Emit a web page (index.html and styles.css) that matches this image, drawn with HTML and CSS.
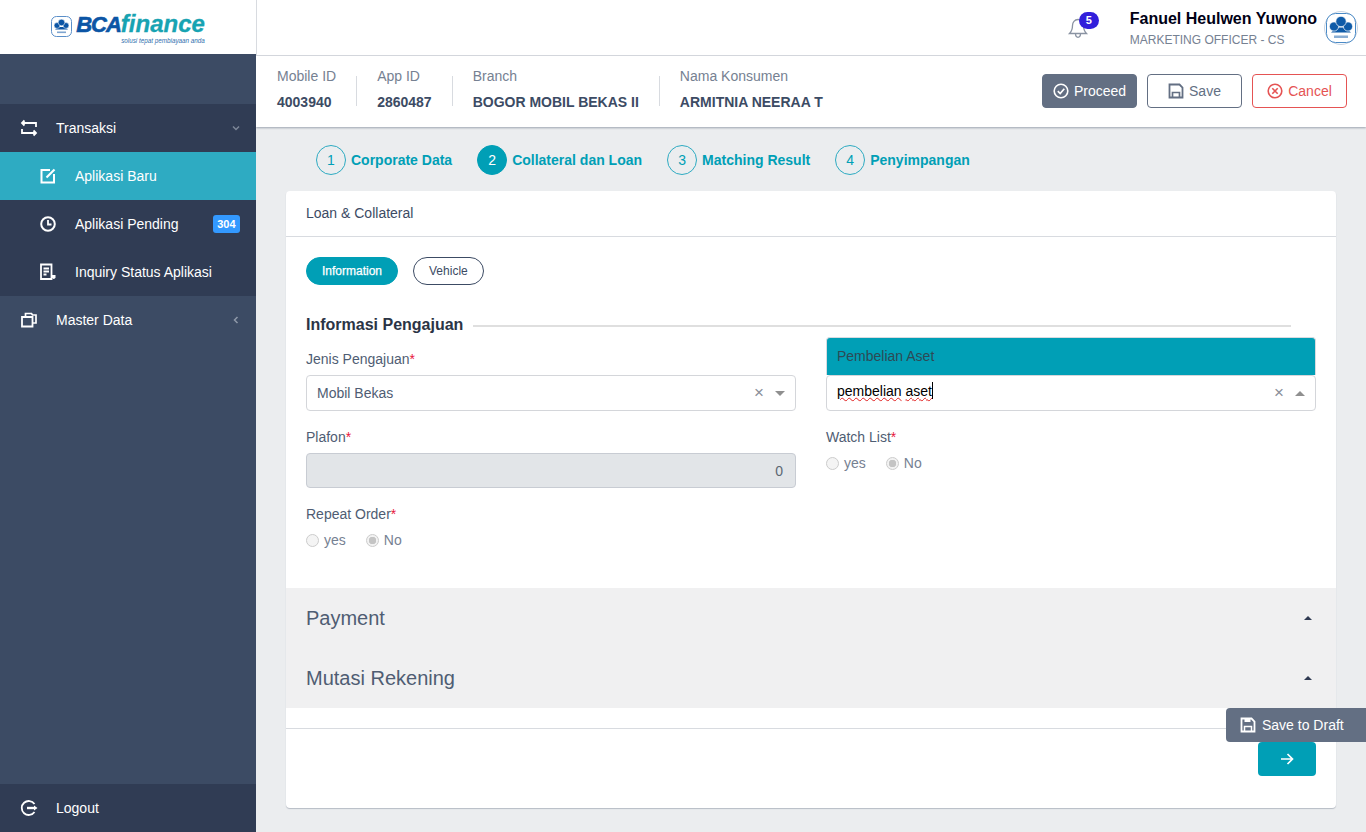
FILE: index.html
```html
<!DOCTYPE html>
<html lang="en">
<head>
    <meta charset="UTF-8">
    <title>BCA Finance</title>
    <link rel="stylesheet" href="styles.css">
</head>
<body>
    <div class="app">
        <aside class="sidebar">
            <div class="brand">
                <svg class="emblem" width="21" height="21" viewBox="0 0 21 21">
                    <rect x="0.5" y="0.5" width="20" height="20" rx="5" fill="#fff" stroke="#5b8fc9"/>
                    <path d="M4 13.500h13l-3.500-2.500h-6z" fill="#0b55a5"/>
                    <circle cx="6" cy="9.500" r="2.900" fill="#0b55a5" stroke="#fff" stroke-width="0.500"/>
                    <circle cx="15" cy="9.500" r="2.900" fill="#0b55a5" stroke="#fff" stroke-width="0.500"/>
                    <circle cx="10.500" cy="6.500" r="3.300" fill="#0b55a5" stroke="#fff" stroke-width="0.500"/>
                    <rect x="6" y="15.500" width="9" height="1.600" fill="#7fa5d0"/>
                </svg>
                <div class="brand-text">
                    <div class="brand-name"><span class="brand-bca">BCA</span><span class="brand-finance">finance</span></div>
                    <div class="brand-tag">solusi tepat pembiayaan anda</div>
                </div>
            </div>
            <nav class="menu">
                <a class="menu-item open">
                    <svg class="menu-icon" viewBox="0 0 18 18"><path d="M4.500 1.500 2 4l2.500 2.500M2.500 4H16v4M13.500 16.500 16 14l-2.500-2.500M15.500 14H2v-4" fill="none" stroke="#fff" stroke-width="1.800"/></svg>
                    <span class="menu-text">Transaksi</span>
                    <svg class="chev" width="8" height="8" viewBox="0 0 8 8"><path d="M1 2.500 4 5.500 7 2.500" fill="none" stroke="#7d8798" stroke-width="1.500"/></svg>
                </a>
                <a class="menu-item sub active">
                    <svg class="menu-icon" viewBox="0 0 18 18"><path d="M11 3H2.500v12.500H15V7" fill="none" stroke="#fff" stroke-width="2"/><path d="M7.500 10.500 15.500 2.500" stroke="#fff" stroke-width="2.200"/></svg>
                    <span class="menu-text">Aplikasi Baru</span>
                </a>
                <a class="menu-item sub">
                    <svg class="menu-icon" viewBox="0 0 18 18"><circle cx="9" cy="9" r="6.800" fill="none" stroke="#fff" stroke-width="2"/><path d="M9 5v4.500h3.500" fill="none" stroke="#fff" stroke-width="1.800"/></svg>
                    <span class="menu-text">Aplikasi Pending</span>
                    <span class="menu-badge">304</span>
                </a>
                <a class="menu-item sub">
                    <svg class="menu-icon" viewBox="0 0 18 18"><path d="M2 1.500h10.500v14.500H2z" fill="none" stroke="#fff" stroke-width="1.800"/><path d="M4.500 5.500h5.500M4.500 8.500h5.500M4.500 11.500h3" stroke="#fff" stroke-width="1.800"/><path d="M13 12h3.500v2.500a1.800 1.800 0 0 1-3.500 0z" fill="#fff"/></svg>
                    <span class="menu-text">Inquiry Status Aplikasi</span>
                </a>
                <a class="menu-item">
                    <svg class="menu-icon" viewBox="0 0 18 18"><path d="M5.500 5V2.500h6l1 1.500h3.500v8h-3" fill="none" stroke="#fff" stroke-width="1.700"/><path d="M2 6h10.500v9.500H2z" fill="none" stroke="#fff" stroke-width="1.800"/></svg>
                    <span class="menu-text">Master Data</span>
                    <svg class="chev" width="8" height="8" viewBox="0 0 8 8"><path d="M5.500 1 2.500 4l3 3" fill="none" stroke="#8f99a9" stroke-width="1.500"/></svg>
                </a>
            </nav>
            <a class="menu-item logout">
                <svg class="menu-icon" viewBox="0 0 18 18"><path d="M14.500 5A7 7 0 1 0 14.500 13" fill="none" stroke="#fff" stroke-width="1.800"/><path d="M7 9h8" stroke="#fff" stroke-width="2.400"/><path d="M14 6.500 17.500 9 14 11.500z" fill="#fff"/></svg>
                <span class="menu-text">Logout</span>
            </a>
        </aside>

        <div class="main">
            <header class="topbar">
                <div class="bell">
                    <svg width="22" height="24" viewBox="0 0 22 24"><path d="M11 3.500c-3.500 0-5.500 2.800-5.500 6 0 4-1 6-3 8h17c-2-2-3-4-3-8 0-3.200-2-6-5.500-6zM8.500 17.500c0 5 5 5 5 0" fill="none" stroke="#8a93a2" stroke-width="1.300"/></svg>
                    <span class="bell-badge">5</span>
                </div>
                <div class="user">
                    <div class="user-name">Fanuel Heulwen Yuwono</div>
                    <div class="user-role">MARKETING OFFICER - CS</div>
                </div>
                <svg class="avatar" width="34" height="34" viewBox="0 0 34 34">
                    <circle cx="17" cy="17" r="16.500" fill="#fff" stroke="#c9d4e2"/>
                    <rect x="2.500" y="2.500" width="29" height="29" rx="9" fill="#fff" stroke="#4a8ac6"/>
                    <path d="M7 21.500h20l-6-5h-8z" fill="#0f5ba8"/>
                    <circle cx="10" cy="15.500" r="4.600" fill="#0f5ba8" stroke="#fff" stroke-width="0.700"/>
                    <circle cx="24" cy="15.500" r="4.600" fill="#0f5ba8" stroke="#fff" stroke-width="0.700"/>
                    <circle cx="17" cy="10.500" r="5.200" fill="#0f5ba8" stroke="#fff" stroke-width="0.700"/>
                    <rect x="10" y="24.500" width="14" height="2.500" fill="#8aaed4"/>
                </svg>
            </header>

            <section class="subheader">
                <div class="meta">
                    <div class="meta-item"><span class="meta-label">Mobile ID</span><strong>4003940</strong></div>
                    <div class="meta-item"><span class="meta-label">App ID</span><strong>2860487</strong></div>
                    <div class="meta-item"><span class="meta-label">Branch</span><strong>BOGOR MOBIL BEKAS II</strong></div>
                    <div class="meta-item"><span class="meta-label">Nama Konsumen</span><strong>ARMITNIA NEERAA T</strong></div>
                </div>
                <div class="actions">
                    <button class="btn btn-proceed">
                        <svg width="16" height="16" viewBox="0 0 16 16"><circle cx="8" cy="8" r="6.800" fill="none" stroke="#fff" stroke-width="1.600"/><path d="M4.800 8.200 7.200 10.500 11.300 5.800" fill="none" stroke="#fff" stroke-width="1.700"/></svg>
                        Proceed
                    </button>
                    <button class="btn btn-save">
                        <svg width="16" height="16" viewBox="0 0 16 16"><path d="M1.500 1.500h10l3 3v10h-13z" fill="none" stroke="#636f83" stroke-width="1.800"/><path d="M4.500 14.500V9.500h7v5" fill="none" stroke="#636f83" stroke-width="1.700"/></svg>
                        Save
                    </button>
                    <button class="btn btn-cancel">
                        <svg width="16" height="16" viewBox="0 0 16 16"><circle cx="8" cy="8" r="6.800" fill="none" stroke="#e55353" stroke-width="1.600"/><path d="M5.300 5.300l5.400 5.400M10.700 5.300l-5.400 5.400" stroke="#e55353" stroke-width="1.600"/></svg>
                        Cancel
                    </button>
                </div>
            </section>

            <ol class="steps">
                <li class="step"><span class="step-no">1</span>Corporate Data</li>
                <li class="step current"><span class="step-no">2</span>Collateral dan Loan</li>
                <li class="step"><span class="step-no">3</span>Matching Result</li>
                <li class="step"><span class="step-no">4</span>Penyimpangan</li>
            </ol>

            <section class="card">
                <div class="card-header">Loan &amp; Collateral</div>
                <div class="card-body">
                    <div class="pills">
                        <span class="pill pill-on">Information</span>
                        <span class="pill">Vehicle</span>
                    </div>
                    <div class="section-title"><span>Informasi Pengajuan</span></div>
                    <div class="form-grid">
                        <div class="field">
                            <label class="label">Jenis Pengajuan<i>*</i></label>
                            <div class="select">
                                <span class="select-value">Mobil Bekas</span>
                                <span class="select-clear">×</span>
                                <span class="caret-down"></span>
                            </div>
                        </div>
                        <div class="field">
                            <label class="label">&nbsp;</label>
                            <div class="select is-open">
                                <div class="dropdown">Pembelian Aset</div>
                                <span class="select-value typed"><span class="misspelled">pembelian</span> <span class="misspelled">aset</span></span>
                                <span class="select-clear">×</span>
                                <span class="caret-up"></span>
                            </div>
                        </div>
                        <div class="field">
                            <label class="label">Plafon<i>*</i></label>
                            <div class="input-disabled">0</div>
                        </div>
                        <div class="field">
                            <label class="label">Watch List<i>*</i></label>
                            <div class="radios">
                                <span class="radio"><span class="dot"></span>yes</span>
                                <span class="radio"><span class="dot checked"></span>No</span>
                            </div>
                        </div>
                        <div class="field">
                            <label class="label">Repeat Order<i>*</i></label>
                            <div class="radios">
                                <span class="radio"><span class="dot"></span>yes</span>
                                <span class="radio"><span class="dot checked"></span>No</span>
                            </div>
                        </div>
                    </div>
                </div>
                <div class="collapse-row"><span>Payment</span><span class="mini-up"></span></div>
                <div class="collapse-row"><span>Mutasi Rekening</span><span class="mini-up"></span></div>
                <div class="card-footer">
                    <button class="btn-next">
                        <svg width="16" height="16" viewBox="0 0 16 16"><path d="M2 8h11M8.500 3 13.500 8l-5 5" fill="none" stroke="#fff" stroke-width="1.700"/></svg>
                    </button>
                </div>
            </section>
        </div>
    </div>

    <button class="draft">
        <svg width="16" height="16" viewBox="0 0 16 16"><path d="M1.500 1.500h10l3 3v10h-13z" fill="none" stroke="#fff" stroke-width="1.800"/><path d="M4.500 1.500v3.500h6V1.500" fill="#fff"/><path d="M4.500 14.500V9.500h7v5" fill="none" stroke="#fff" stroke-width="1.500"/></svg>
        Save to Draft
    </button>
</body>
</html>
```

FILE: styles.css
```css
* {
    box-sizing: border-box;
}
body {
    margin: 0;
    height: 832px;
    overflow: hidden;
    position: relative;
    background-color: #ebedef;
    color: #3c4b64;
    font-family: "Liberation Sans", Arial, sans-serif;
    font-size: 14px;
}
.app {
    display: flex;
    height: 832px;
}

/* sidebar */
.sidebar {
    width: 256px;
    flex-shrink: 0;
    display: flex;
    flex-direction: column;
    background-color: #3c4b64;
    color: #fff;
}
.brand {
    height: 54px;
    background-color: #fff;
    display: flex;
    align-items: center;
    justify-content: center;
    gap: 4px;
}
.emblem {
    margin-top: -2px;
}
.brand-text {
    display: flex;
    flex-direction: column;
    margin-top: 4px;
}
.brand-name {
    font-weight: bold;
    font-style: italic;
    line-height: 20px;
    white-space: nowrap;
}
.brand-bca {
    color: #0b55a5;
    font-size: 22px;
    letter-spacing: -1px;
    -webkit-text-stroke: 0.6px #0b55a5;
}
.brand-finance {
    color: #17a3b2;
    font-size: 24px;
    -webkit-text-stroke: 0.3px #17a3b2;
}
.brand-tag {
    font-size: 6.300px;
    font-style: italic;
    color: #2f6fae;
    text-align: right;
    line-height: 7px;
}
.menu {
    margin-top: 50px;
    flex: 1;
}
.menu-item {
    height: 48px;
    display: flex;
    align-items: center;
    padding: 0 16px 0 20px;
    color: #fff;
}
.menu-icon {
    width: 18px;
    height: 18px;
    flex-shrink: 0;
    margin-right: 18px;
}
.menu-text {
    flex: 1;
}
.menu-item.open, .menu-item.sub, .logout {
    background-color: #303c54;
}
.menu-item.sub {
    padding-left: 39px;
}
.menu-item.active {
    background-color: #2eabc2;
}
.menu-badge {
    background-color: #39f;
    font-size: 11px;
    font-weight: bold;
    padding: 2px 4.500px;
    border-radius: 3px;
    line-height: 14px;
}

/* top */
.main {
    flex: 1;
    min-width: 0;
}
.topbar {
    height: 56px;
    background-color: #fff;
    border-bottom: 1px solid #d8dbe0;
    border-left: 1px solid #d8dbe0;
    display: flex;
    align-items: center;
    justify-content: flex-end;
    padding-right: 8px;
}
.bell {
    position: relative;
    width: 22px;
    height: 24px;
    margin-right: 41px;
    margin-top: 1px;
}
.bell-badge {
    position: absolute;
    top: -4px;
    left: 12px;
    width: 20px;
    height: 17px;
    border-radius: 9px;
    background-color: #321fdb;
    color: #fff;
    font-size: 11px;
    font-weight: bold;
    text-align: center;
    line-height: 17px;
}
.user {
    padding-top: 2px;
}
.user-name {
    font-size: 16px;
    font-weight: bold;
    color: #000015;
    line-height: 18px;
    margin-bottom: 4px;
}
.user-role {
    font-size: 12px;
    color: #768192;
    line-height: 16px;
}
.avatar {
    margin-left: 7px;
}
.subheader {
    height: 71px;
    background-color: #fff;
    box-shadow: 0 1px 2px rgba(60, 75, 100, 0.45);
    display: flex;
    align-items: flex-start;
    justify-content: space-between;
    padding: 12px 19px 0 21px;
}
.meta {
    display: flex;
    align-items: flex-start;
}
.meta-item {
    display: flex;
    flex-direction: column;
    gap: 10px;
    padding: 0 20px 0 21px;
    position: relative;
}
.meta-item:first-child {
    padding-left: 0;
}
.meta-item + .meta-item::before {
    content: "";
    position: absolute;
    left: 0;
    top: 8px;
    width: 1px;
    height: 30px;
    background-color: #d8dbe0;
}
.meta-label {
    color: #768192;
    line-height: 16px;
}
.meta-item strong {
    font-size: 14px;
    line-height: 16px;
}
.actions {
    display: flex;
    gap: 10px;
    margin-top: 6px;
}
.btn {
    width: 95px;
    height: 34px;
    border-radius: 4px;
    font: 14px "Liberation Sans", Arial, sans-serif;
    display: flex;
    align-items: center;
    justify-content: center;
    gap: 5px;
    background-color: #fff;
    border: 1px solid #636f83;
    padding: 0;
}
.btn-proceed {
    background-color: #636f83;
    color: #fff;
}
.btn-save {
    color: #636f83;
}
.btn-cancel {
    border-color: #e55353;
    color: #e55353;
}

/* steps */
.steps {
    list-style: none;
    margin: 0;
    padding: 18px 0 0 60px;
    display: flex;
    gap: 25px;
}
.step {
    display: flex;
    align-items: center;
    gap: 5px;
    height: 30px;
    color: #009fb6;
    font-weight: bold;
}
.step-no {
    width: 30px;
    height: 30px;
    border-radius: 50%;
    border: 1px solid #2eabc2;
    display: flex;
    align-items: center;
    justify-content: center;
    font-weight: normal;
    font-size: 14px;
}
.step.current .step-no {
    background-color: #009fb6;
    color: #fff;
    border-color: #009fb6;
}

/* card */
.card {
    margin: 16px 30px 0;
    height: 617px;
    background-color: #fff;
    border-radius: 4px;
    box-shadow: 0 1px 1px rgba(60, 75, 100, 0.3);
    display: flex;
    flex-direction: column;
}
.card-header {
    height: 46px;
    border-bottom: 1px solid #d8dbe0;
    padding: 0 20px 2px;
    display: flex;
    align-items: center;
    font-size: 14px;
}
.card-body {
    padding: 20px 20px 0;
    height: 351px;
}
.pills {
    display: flex;
    gap: 15px;
}
.pill {
    height: 28px;
    border-radius: 14px;
    border: 1px solid #3c4b64;
    padding: 0 15px;
    display: flex;
    align-items: center;
    font-size: 12px;
}
.pill-on {
    background-color: #009fb6;
    border-color: #009fb6;
    color: #fff;
    -webkit-text-stroke: 0.25px #fff;
}
.section-title {
    margin-top: 31px;
    margin-right: 25px;
    display: flex;
    align-items: center;
    gap: 10px;
    font-size: 16px;
    font-weight: bold;
    color: #2b3445;
    line-height: 18px;
}
.section-title::after {
    content: "";
    flex: 1;
    height: 2px;
    background-color: #dfdfdf;
    margin-top: 2px;
}
.form-grid {
    display: grid;
    grid-template-columns: 490px 490px;
    column-gap: 30px;
    row-gap: 18px;
    margin-top: 17px;
}
.label {
    display: block;
    height: 16px;
    line-height: 16px;
    margin-bottom: 8px;
    color: #4f5d73;
}
.label i {
    font-style: normal;
    color: #e8173c;
}
.select {
    height: 36px;
    border: 1px solid #d4d6da;
    border-radius: 4px;
    display: flex;
    align-items: center;
    padding: 0 10px;
    position: relative;
    background-color: #fff;
}
.select-value {
    flex: 1;
    color: #4f5d73;
}
.select-value.typed {
    color: #000;
    margin-bottom: 6px;
}
.typed::after {
    content: "";
    display: inline-block;
    width: 1px;
    height: 17px;
    background-color: #000;
    vertical-align: -3px;
}
.misspelled {
    text-decoration: underline wavy #e02020 1px;
    text-underline-offset: 1px;
}
.select-clear {
    color: #8a8f99;
    font-size: 17px;
    margin-right: 11px;
    line-height: 16px;
}
.caret-down, .caret-up {
    width: 0;
    height: 0;
    border-left: 5px solid transparent;
    border-right: 5px solid transparent;
}
.caret-down {
    border-top: 5px solid #8f8f8f;
}
.caret-up {
    border-bottom: 5px solid #8f8f8f;
}
.dropdown {
    position: absolute;
    left: -1px;
    right: -1px;
    bottom: 35px;
    height: 38px;
    padding: 0 10px 2px;
    display: flex;
    align-items: center;
    background-color: #009fb6;
    border: 1px solid #d8dbe0;
    border-bottom: 0;
    border-radius: 4px 4px 0 0;
    color: #2d4a55;
}
.input-disabled {
    height: 35px;
    background-color: #e2e5e8;
    border: 1px solid #c8ccd3;
    border-radius: 4px;
    display: flex;
    align-items: center;
    justify-content: flex-end;
    padding: 0 12px;
    color: #5c6873;
}
.radios {
    display: flex;
    gap: 20px;
    height: 16px;
    margin-top: 10px;
}
.radio {
    display: flex;
    align-items: center;
    gap: 5px;
    color: #768192;
}
.dot {
    width: 13px;
    height: 13px;
    border-radius: 50%;
    border: 1px solid #ccc;
    background-color: #f4f4f4;
}
.dot.checked {
    background: radial-gradient(circle, #c4c4c4 0 3.500px, #f2f2f2 4px);
}
.collapse-row {
    height: 60px;
    background-color: #f0f0f1;
    display: flex;
    align-items: center;
    justify-content: space-between;
    padding: 0 24px 0 20px;
    font-size: 20px;
    color: #4f5d73;
}
.mini-up {
    width: 0;
    height: 0;
    border-left: 4px solid transparent;
    border-right: 4px solid transparent;
    border-bottom: 4px solid #2f3a52;
}
.card-footer {
    margin-top: 20px;
    flex: 1;
    border-top: 1px solid #d8dbe0;
    padding: 13px 20px 0;
    display: flex;
    justify-content: flex-end;
    align-items: flex-start;
}
.btn-next {
    width: 58px;
    height: 34px;
    border: 0;
    border-radius: 4px;
    background-color: #009fb6;
    display: flex;
    align-items: center;
    justify-content: center;
    padding: 0;
}

/* floats over the card on the right edge */
.draft {
    position: absolute;
    top: 708px;
    right: 0;
    width: 140px;
    height: 34px;
    border: 0;
    border-radius: 4px 0 0 4px;
    background-color: #636f83;
    color: #fff;
    font: 14px "Liberation Sans", Arial, sans-serif;
    display: flex;
    align-items: center;
    gap: 6px;
    padding: 0 0 0 14px;
}
```
